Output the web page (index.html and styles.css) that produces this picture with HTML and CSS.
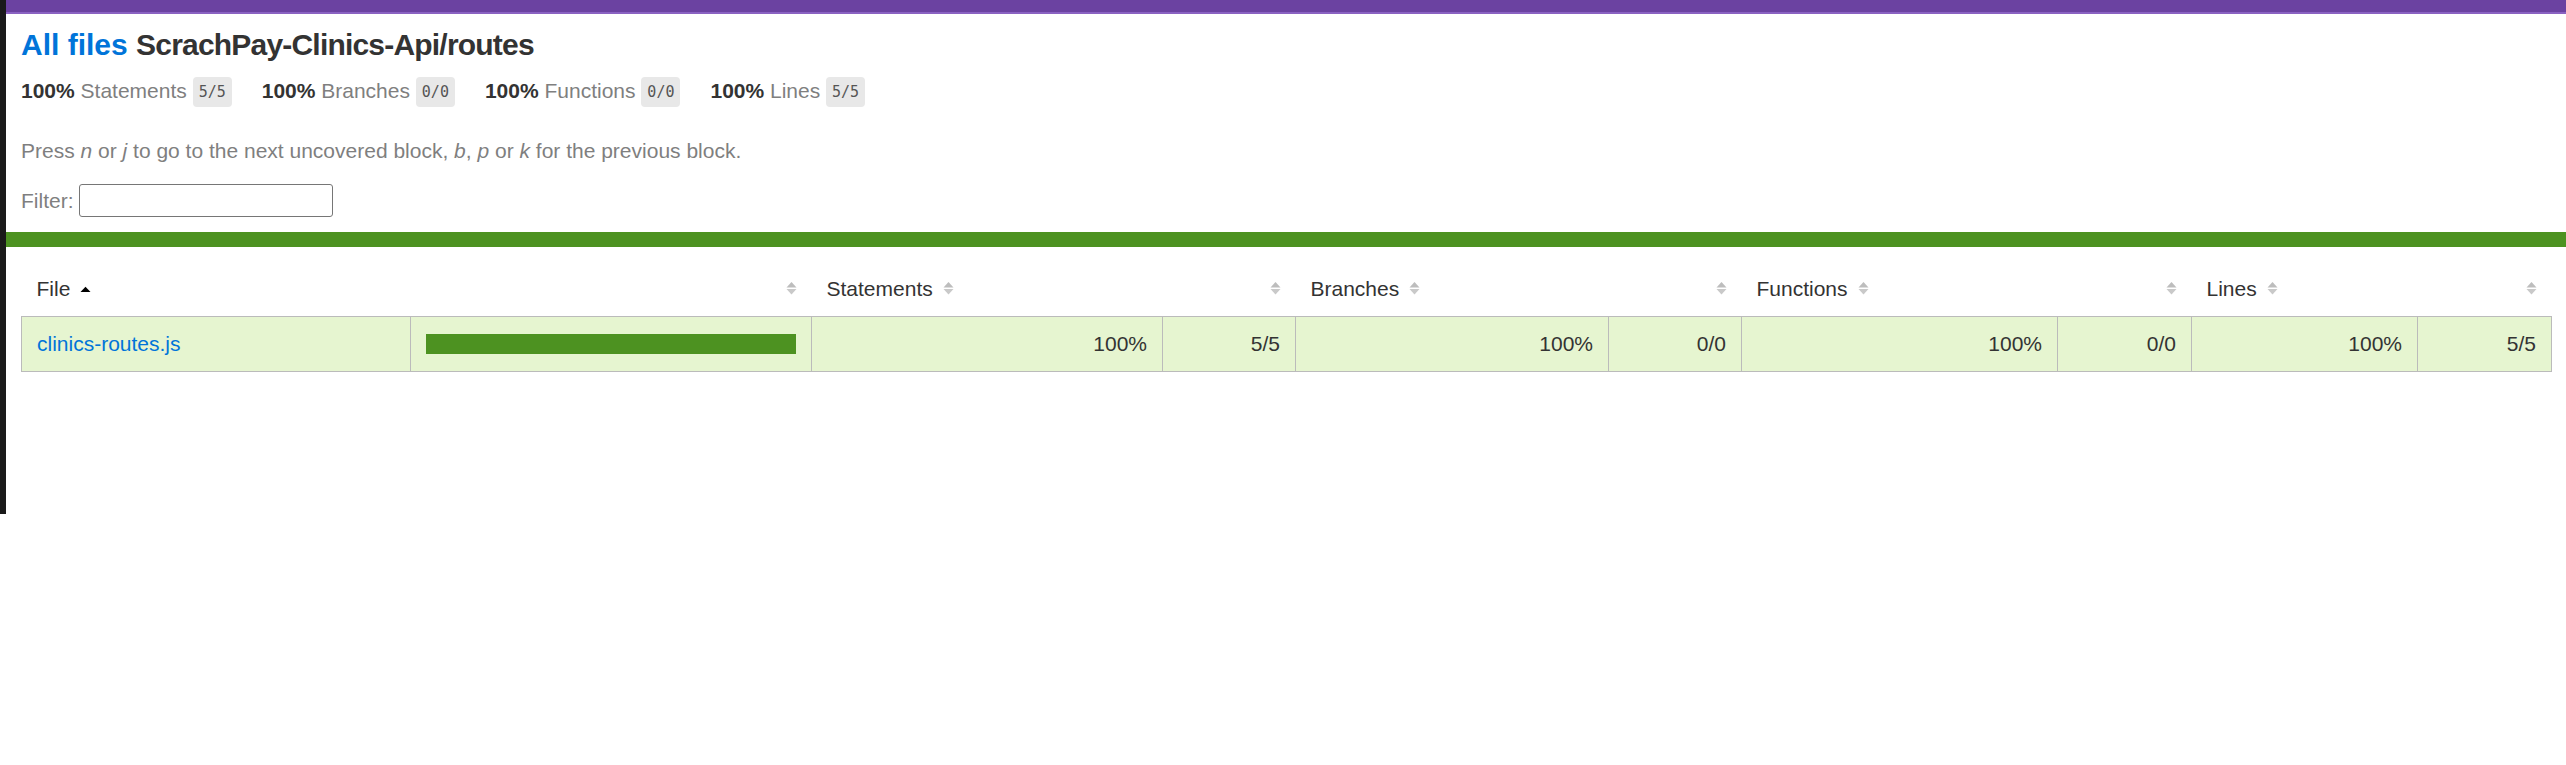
FILE: index.html
```html
<!DOCTYPE html>
<html lang="en">
<head>
<meta charset="utf-8">
<title>Code coverage report for ScrachPay-Clinics-Api/routes</title>
<link rel="stylesheet" href="styles.css">
</head>
<body>
<div class="frame-edge"></div>
<div class="page">
  <div class="topbar"></div>
  <div class="head">
    <h1 class="title"><a href="#">All files</a> <span class="path">ScrachPay-Clinics-Api/routes</span></h1>
    <div class="summary">
      <div class="metric"><span class="strong">100% </span><span class="quiet">Statements</span> <span class="fraction">5/5</span></div>
      <div class="metric"><span class="strong">100% </span><span class="quiet">Branches</span> <span class="fraction">0/0</span></div>
      <div class="metric"><span class="strong">100% </span><span class="quiet">Functions</span> <span class="fraction">0/0</span></div>
      <div class="metric"><span class="strong">100% </span><span class="quiet">Lines</span> <span class="fraction">5/5</span></div>
    </div>
    <p class="quiet hint">Press <em>n</em> or <em>j</em> to go to the next uncovered block, <em>b</em>, <em>p</em> or <em>k</em> for the previous block.</p>
    <div class="quiet filter">Filter:<input type="search" class="search"></div>
  </div>
  <div class="status-line"></div>
  <div class="listing">
    <table class="coverage-summary">
      <colgroup>
        <col class="c-file"><col class="c-pic">
        <col class="c-spct"><col class="c-sabs">
        <col class="c-bpct"><col class="c-babs">
        <col class="c-fpct"><col class="c-fabs">
        <col class="c-lpct"><col class="c-labs">
      </colgroup>
      <thead>
        <tr>
          <th class="file">File<span class="sorter"><svg width="11" height="15" viewBox="0 0 11 15"><polygon points="0.5,11 10.5,11 5.5,5.7" fill="#000"/></svg></span></th>
          <th class="pic"><span class="sorter"><svg width="11" height="15" viewBox="0 0 11 15"><polygon points="0.5,6.5 10.5,6.5 5.5,1" fill="#bdbdbd"/><polygon points="0.5,8 10.5,8 5.5,13.5" fill="#c9c9c9"/></svg></span></th>
          <th class="pct">Statements<span class="sorter"><svg width="11" height="15" viewBox="0 0 11 15"><polygon points="0.5,6.5 10.5,6.5 5.5,1" fill="#bdbdbd"/><polygon points="0.5,8 10.5,8 5.5,13.5" fill="#c9c9c9"/></svg></span></th>
          <th class="abs"><span class="sorter"><svg width="11" height="15" viewBox="0 0 11 15"><polygon points="0.5,6.5 10.5,6.5 5.5,1" fill="#bdbdbd"/><polygon points="0.5,8 10.5,8 5.5,13.5" fill="#c9c9c9"/></svg></span></th>
          <th class="pct">Branches<span class="sorter"><svg width="11" height="15" viewBox="0 0 11 15"><polygon points="0.5,6.5 10.5,6.5 5.5,1" fill="#bdbdbd"/><polygon points="0.5,8 10.5,8 5.5,13.5" fill="#c9c9c9"/></svg></span></th>
          <th class="abs"><span class="sorter"><svg width="11" height="15" viewBox="0 0 11 15"><polygon points="0.5,6.5 10.5,6.5 5.5,1" fill="#bdbdbd"/><polygon points="0.5,8 10.5,8 5.5,13.5" fill="#c9c9c9"/></svg></span></th>
          <th class="pct">Functions<span class="sorter"><svg width="11" height="15" viewBox="0 0 11 15"><polygon points="0.5,6.5 10.5,6.5 5.5,1" fill="#bdbdbd"/><polygon points="0.5,8 10.5,8 5.5,13.5" fill="#c9c9c9"/></svg></span></th>
          <th class="abs"><span class="sorter"><svg width="11" height="15" viewBox="0 0 11 15"><polygon points="0.5,6.5 10.5,6.5 5.5,1" fill="#bdbdbd"/><polygon points="0.5,8 10.5,8 5.5,13.5" fill="#c9c9c9"/></svg></span></th>
          <th class="pct">Lines<span class="sorter"><svg width="11" height="15" viewBox="0 0 11 15"><polygon points="0.5,6.5 10.5,6.5 5.5,1" fill="#bdbdbd"/><polygon points="0.5,8 10.5,8 5.5,13.5" fill="#c9c9c9"/></svg></span></th>
          <th class="abs"><span class="sorter"><svg width="11" height="15" viewBox="0 0 11 15"><polygon points="0.5,6.5 10.5,6.5 5.5,1" fill="#bdbdbd"/><polygon points="0.5,8 10.5,8 5.5,13.5" fill="#c9c9c9"/></svg></span></th>
        </tr>
      </thead>
      <tbody>
        <tr class="high">
          <td class="file"><a href="#">clinics-routes.js</a></td>
          <td class="pic"><div class="chart"><div class="cover-fill" style="width: 100%"></div></div></td>
          <td class="pct">100%</td>
          <td class="abs">5/5</td>
          <td class="pct">100%</td>
          <td class="abs">0/0</td>
          <td class="pct">100%</td>
          <td class="abs">0/0</td>
          <td class="pct">100%</td>
          <td class="abs">5/5</td>
        </tr>
      </tbody>
    </table>
  </div>
</div>
</body>
</html>
```

FILE: styles.css
```css
html, body {
  margin: 0;
  padding: 0;
  background: #fff;
}

body {
  font-family: "Liberation Sans", Arial, sans-serif;
  font-size: 21px;
  line-height: 24px;
  color: #333;
}

.frame-edge {
  position: absolute;
  left: 0;
  top: 0;
  width: 6px;
  height: 514px;
  background: #1a1a1a;
}

.page {
  margin-left: 6px;
}

.topbar {
  height: 12px;
  background: #6b42a1;
  border-bottom: 2px solid #8a62c2;
}

.head {
  padding: 15px;
}

.title {
  margin: 0;
  font-size: 30px;
  line-height: 32px;
  font-weight: bold;
  color: #333;
}

.title a {
  color: #0074d9;
  text-decoration: none;
}

.title .path {
  letter-spacing: -0.8px;
}

.summary {
  display: flex;
  padding: 18px 0 15px;
}

.metric {
  padding-right: 30px;
  white-space: nowrap;
}

.strong {
  font-weight: bold;
}

.quiet {
  color: #7f7f7f;
}

.fraction {
  font-family: "DejaVu Sans Mono", "Liberation Mono", monospace;
  font-size: 15px;
  color: #555;
  background: #e8e8e8;
  padding: 6px 6px;
  border-radius: 4px;
  vertical-align: middle;
}

.hint {
  margin: 20px 0 21px;
}

.filter {
  display: flex;
  align-items: center;
  height: 33px;
}

.search {
  width: 254px;
  height: 33px;
  box-sizing: border-box;
  margin: 0 0 0 5px;
  padding: 1px 3px;
  border: 1px solid #767676;
  border-radius: 3px;
  font: 20px "Liberation Sans", Arial, sans-serif;
  background: #fff;
}

.status-line {
  height: 15px;
  background: #4d9221;
}

.listing {
  padding: 15px;
}

.coverage-summary {
  width: 100%;
  border-collapse: collapse;
  table-layout: fixed;
}

.c-file { width: 389px; }
.c-pic { width: 401px; }
.c-spct { width: 351px; }
.c-sabs { width: 133px; }
.c-bpct { width: 313px; }
.c-babs { width: 133px; }
.c-fpct { width: 316px; }
.c-fabs { width: 134px; }
.c-lpct { width: 226px; }
.c-labs { width: 134px; }

.coverage-summary thead tr {
  border-bottom: 1px solid #bbb;
}

.coverage-summary tbody {
  border: 1px solid #bbb;
}

.coverage-summary th {
  padding: 15px;
  text-align: left;
  font-weight: normal;
  white-space: nowrap;
  line-height: 24px;
}

.coverage-summary th.pic,
.coverage-summary th.abs,
.coverage-summary td.pct,
.coverage-summary td.abs {
  text-align: right;
}

.coverage-summary td {
  padding: 15px;
  line-height: 24px;
  border-right: 1px solid #bbb;
  white-space: nowrap;
}

.coverage-summary td:last-child {
  border-right: none;
}

.high td {
  background: rgb(230, 245, 208);
}

.coverage-summary td.file a {
  color: #0074d9;
  text-decoration: none;
}

.sorter {
  display: inline-block;
  width: 11px;
  height: 15px;
  margin-left: 10px;
  vertical-align: baseline;
}

.sorter svg {
  display: block;
}

.chart {
  line-height: 0;
}

.cover-fill {
  height: 20px;
  background: #4d9221;
}
```
